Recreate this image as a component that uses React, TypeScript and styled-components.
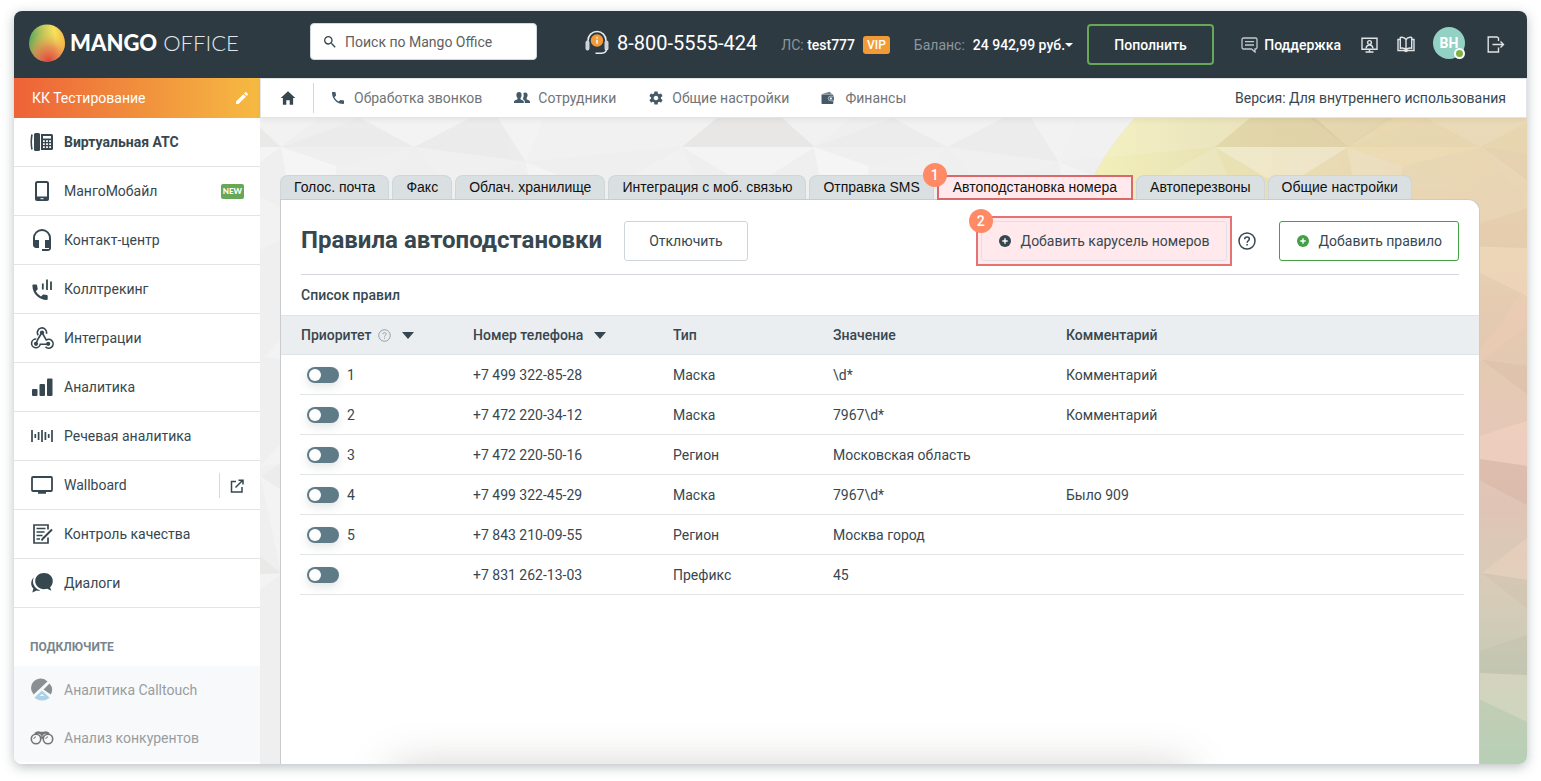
import React from "react";
import styled, { createGlobalStyle, css } from "styled-components";
import { MdSearch, MdEdit, MdPhone, MdHeadsetMic } from "react-icons/md";
import { IoMdHome, IoMdSettings } from "react-icons/io";

const ink = "#37474f";
const line = "#e1e5e8";

const GlobalStyle = createGlobalStyle`
  *, *::before, *::after { box-sizing: border-box; }
  body {
    margin: 0;
    background: #fff;
    color: ${ink};
    font: 14px/20px Roboto, "Open Sans", sans-serif;
  }
  button, input { font: inherit; color: inherit; }
  button { cursor: pointer; padding: 0; border: 0; background: none; }
  a { color: inherit; text-decoration: none; }
  svg { display: block; flex: none; }
`;

const Page = styled.div`
  min-height: 100vh;
  padding: 11px 14px 17px;
  display: flex;
`;

const Window = styled.div`
  flex: 1;
  min-width: 0;
  display: flex;
  flex-direction: column;
  border-radius: 8px;
  overflow: hidden;
  box-shadow: 0 3px 12px rgba(55, 71, 79, 0.34);
`;

/* ---------- header ---------- */

const Header = styled.header`
  display: flex;
  align-items: center;
  height: 67px;
  padding: 0 22px 0 15px;
  background: #2e3a42;
  color: #fff;
  white-space: nowrap;
`;

const Logo = styled.a`
  display: flex;
  align-items: center;
  gap: 5px;
  width: 281px;
  margin-top: -4px;
  font: 300 22px/28px Lato, sans-serif;
  color: #e3e6e8;
  strong { font-weight: 900; color: #fff; }
`;

const Search = styled.label`
  display: flex;
  align-items: center;
  gap: 7px;
  width: 227px;
  height: 37px;
  margin-top: -6px;
  padding-left: 11px;
  border: 1px solid #cfd8dc;
  border-radius: 4px;
  background: #fff;
  color: ${ink};
  input {
    flex: 1;
    min-width: 0;
    border: 0;
    padding: 0;
    outline: 0;
    background: none;
    &::placeholder { color: #616161; opacity: 1; }
  }
`;

const Hotline = styled.a`
  display: flex;
  align-items: center;
  gap: 8px;
  margin: -4px 24px 0 48px;
  font-size: 20px;
  line-height: 24px;
`;

const Account = styled.div`
  display: flex;
  align-items: center;
  gap: 8px;
  margin-right: 24px;
  font-weight: 500;
`;

const Dim = styled.span`
  color: #8c979d;
  font-weight: 400;
`;

const Vip = styled.span`
  padding: 0 4px;
  border-radius: 3px;
  background: #f29a36;
  font-size: 12px;
  line-height: 18px;
`;

const Balance = styled.button`
  display: flex;
  align-items: center;
  font-weight: 500;
  &::after {
    content: "";
    border: 4px solid transparent;
    border-top-color: #fff;
    border-bottom: 0;
  }
`;

const TopUp = styled.button`
  width: 127px;
  height: 41px;
  margin-left: -10px;
  border: 2px solid #66a858;
  border-radius: 4px;
  font-weight: 500;
`;

const HeaderTools = styled.div`
  display: flex;
  align-items: center;
  margin-left: auto;
`;

const Support = styled.a`
  display: flex;
  align-items: center;
  gap: 6px;
  margin-right: 20px;
  font-weight: 500;
`;

const ToolButton = styled.button<{ $gap: number }>`
  margin-right: ${(p) => p.$gap}px;
  color: #dfe3e5;
`;

const Avatar = styled.button`
  position: relative;
  width: 32px;
  height: 32px;
  margin: -4px 22px 0 0;
  border-radius: 50%;
  background: #94d1c5;
  font-weight: 700;
  &::after {
    content: "";
    position: absolute;
    right: 0;
    bottom: 0;
    width: 11px;
    height: 11px;
    border: 2px solid #fff;
    border-radius: 50%;
    background: #7cb342;
  }
`;

/* ---------- sidebar ---------- */

const Body = styled.div`
  flex: 1;
  display: flex;
`;

const Sidebar = styled.aside`
  flex: none;
  width: 246px;
  background: #fff;
`;

const Workspace = styled.button`
  display: flex;
  align-items: center;
  justify-content: space-between;
  width: 100%;
  height: 40px;
  padding: 0 10px 0 18px;
  background: linear-gradient(90deg, #ee6238, #f08a3c 45%, #f6bb42);
  color: #fff;
`;

const List = styled.ul`
  list-style: none;
  margin: 0;
  padding: 0;
`;

const Item = styled.li<{ $muted?: boolean }>`
  display: flex;
  align-items: center;
  padding-right: 16px;
  ${(p) =>
    p.$muted
      ? css`
          height: 48px;
          background: #f7f9fb;
          color: #999da0;
        `
      : css`
          height: 49px;
          border-bottom: 1px solid ${line};
        `}
`;

const ItemLink = styled.a<{ $active?: boolean }>`
  flex: 1;
  display: flex;
  align-items: center;
  gap: 10px;
  padding-left: 16px;
  color: inherit;
  font-weight: ${(p) => (p.$active ? 700 : 400)};
`;

const New = styled.span`
  padding: 0 2px;
  border-radius: 2px;
  background: #66a858;
  color: #fff;
  font: 900 8px/15px Lato, sans-serif;
`;

const External = styled.a`
  padding: 6px 0 5px 10px;
  border-left: 1px solid #d5d9e0;
`;

const ListTitle = styled.h2`
  margin: 0;
  padding: 29px 16px 9px;
  font-size: 12px;
  line-height: 20px;
  font-weight: 700;
  color: #78868f;
  text-transform: uppercase;
`;

/* ---------- content ---------- */

const Content = styled.div`
  flex: 1;
  min-width: 0;
  display: flex;
  flex-direction: column;
`;

const SubNav = styled.nav`
  position: relative;
  display: flex;
  align-items: center;
  height: 40px;
  padding: 0 20px 0 18px;
  border: 1px solid ${line};
  background: #fff;
  box-shadow: 0 2px 6px rgba(0, 0, 0, 0.06);
  color: #707578;
  z-index: 1;
`;

const HomeLink = styled.a`
  display: flex;
  align-items: center;
  height: 30px;
  padding-right: 16px;
  border-right: 1px solid #cfd6dd;
  color: ${ink};
`;

const SubLink = styled.a`
  display: flex;
  align-items: center;
  margin: 0 16px;
  svg { margin-right: 8px; color: #455a68; }
`;

const Version = styled.span`
  margin-left: auto;
  color: ${ink};
`;

const Main = styled.main`
  position: relative;
  flex: 1;
  display: flex;
  flex-direction: column;
  padding: 57px 47px 0 20px;
  background: #efefef;
`;

const Backdrop = styled.svg`
  position: absolute;
  inset: 0;
  width: 100%;
  height: 100%;
`;

const Tabs = styled.div`
  position: relative;
  display: flex;
  gap: 3px;
`;

const TabWrap = styled.div<{ $active?: boolean }>`
  position: relative;
  z-index: ${(p) => (p.$active ? 1 : 0)};
  margin-bottom: ${(p) => (p.$active ? -1 : 0)}px;
`;

const Tab = styled.button<{ $active?: boolean }>`
  display: block;
  padding: 0 13px;
  font: 14px/23px "Liberation Sans", Arial, sans-serif;
  color: #111;
  ${(p) =>
    p.$active
      ? css`
          padding: 0 14px;
          border: 2px solid #d9686c;
          line-height: 21px;
          background: #ffe9ec;
        `
      : css`
          border: 1px solid #cdd6d8;
          border-bottom: 0;
          border-radius: 8px 8px 0 0;
          background: #dae0e1;
        `}
`;

const StepBadge = styled.span`
  position: absolute;
  left: -14px;
  top: -12px;
  z-index: 2;
  width: 24px;
  height: 24px;
  border-radius: 50%;
  background: #ff8a65;
  color: #fff;
  font-weight: 500;
  line-height: 24px;
  text-align: center;
`;

const Panel = styled.section`
  position: relative;
  flex: 1;
  border: 1px solid #c8cccf;
  border-bottom: 0;
  border-radius: 0 12px 0 0;
  background: #fff;
  overflow: hidden;
  &::after {
    content: "";
    position: absolute;
    left: 10%;
    right: 25%;
    bottom: -32px;
    height: 20px;
    box-shadow: 0 0 44px 8px rgba(70, 60, 55, 0.26);
  }
`;

const Toolbar = styled.div`
  display: flex;
  align-items: center;
  margin: 0 20px;
  padding: 21px 0 13px;
  border-bottom: 1px solid #d3d7dd;
`;

const Title = styled.h1`
  margin: 0 22px 3px 0;
  font-size: 24px;
  line-height: 32px;
  font-weight: 700;
`;

const Button = styled.button<{ $kind?: "green" | "marked" }>`
  display: flex;
  align-items: center;
  gap: 9px;
  height: 40px;
  padding: 0 ${(p) => (p.$kind ? 16 : 24)}px;
  border: 1px solid ${(p) => (p.$kind === "green" ? "#43a047" : p.$kind ? "#e3dfe5" : "#cfd4db")};
  border-radius: 3px;
  background: ${(p) => (p.$kind === "marked" ? "none" : "#fff")};
`;

const Marked = styled.div`
  position: relative;
  margin: -5px 6px -5px auto;
  padding: 3px;
  border: 2px solid #e57373;
  background: #ffe9ec;
`;

const CornerBadge = styled(StepBadge)`
  left: -9px;
  top: -9px;
`;

const Help = styled.button`
  margin-right: 23px;
`;

const ListName = styled.h2`
  margin: 0 20px;
  font-size: 14px;
  line-height: 40px;
  font-weight: 500;
`;

const Table = styled.table`
  width: 100%;
  table-layout: fixed;
  border-collapse: collapse;
  text-align: left;
  th, td { height: 40px; padding: 0; }
  th:first-child, td:first-child { padding-left: 20px; }
  th { font-weight: 500; }
  thead tr { background: #eaeef1; box-shadow: inset 0 1px #dfe4e9, inset 0 -1px #dfe4e9; }
  tbody tr {
    background: linear-gradient(${line}, ${line}) no-repeat 19px 100% / calc(100% - 34px) 1px;
  }
`;

const Col = styled.col<{ $w?: number }>`
  width: ${(p) => (p.$w ? p.$w + "px" : "auto")};
`;

const Sort = styled.button`
  display: flex;
  align-items: center;
  font-weight: 500;
  svg { margin-left: 7px; color: #8b9ba5; }
  &::after {
    content: "";
    margin-left: 11px;
    border: 6px solid transparent;
    border-top: 7px solid ${ink};
    border-bottom: 0;
  }
`;

const Priority = styled.label`
  display: flex;
  align-items: center;
  gap: 8px;
  padding-left: 6px;
`;

const Toggle = styled.input`
  appearance: none;
  width: 32px;
  height: 16px;
  margin: 0;
  padding: 2px;
  border-radius: 8px;
  background: #5f7b88;
  box-shadow: 0 4px 8px rgba(55, 71, 79, 0.14);
  &::before {
    content: "";
    display: block;
    width: 12px;
    height: 12px;
    border-radius: 50%;
    background: #fff;
  }
  &:checked::before { margin-left: auto; }
`;

/* ---------- drawings ---------- */

const MangoMark = () => (
  <svg width="36" height="38" viewBox="0 0 36 38">
    <defs>
      <linearGradient id="mg1" x1="0" y1="0.55" x2="1" y2="0.35">
        <stop offset="0" stopColor="#4fa35c" />
        <stop offset="0.45" stopColor="#c3c75c" />
        <stop offset="0.75" stopColor="#f7e25c" />
        <stop offset="1" stopColor="#f3b73f" />
      </linearGradient>
      <radialGradient id="mg2" cx="0.55" cy="1" r="0.8">
        <stop offset="0" stopColor="#e0403f" />
        <stop offset="0.5" stopColor="#ea7f4b" stopOpacity="0.75" />
        <stop offset="1" stopColor="#f5c84c" stopOpacity="0" />
      </radialGradient>
    </defs>
    <ellipse cx="18" cy="19" rx="18" ry="18.6" fill="url(#mg1)" />
    <ellipse cx="18" cy="19" rx="18" ry="18.6" fill="url(#mg2)" />
  </svg>
);

const HotlineIcon = () => (
  <svg width="24" height="25" viewBox="0 0 24 25" fill="none" stroke="#e9ecee">
    <path d="M3 12V10.500a9 9 0 0 1 18 0V12" strokeWidth="1.600" />
    <path d="M2.500 12.500v6M21.500 12.500v6" strokeWidth="4" strokeLinecap="round" stroke="#cdd3d6" />
    <path d="M21.500 19c0 3-2 4-5 4.300h-6" strokeWidth="1.500" />
    <circle cx="12" cy="10.500" r="6.200" fill="#f29a36" stroke="none" />
    <path d="M12 9.800v4M12 7v1.500" strokeWidth="1.800" />
  </svg>
);

const ChatIcon = () => (
  <svg width="17" height="16" viewBox="0 0 17 16" fill="none" stroke="#c3c9cd" strokeWidth="1.300">
    <path d="M2.500 1h12A1.500 1.500 0 0 1 16 2.500v8a1.500 1.500 0 0 1-1.500 1.500H14v3l-3.500-3h-8A1.500 1.500 0 0 1 1 10.500v-8A1.500 1.500 0 0 1 2.500 1zM4 4.700h9M4 8h9" />
  </svg>
);

const MonitorUserIcon = () => (
  <svg width="17" height="16" viewBox="0 0 17 16" fill="none" stroke="currentColor" strokeWidth="1.400">
    <path d="M1 1.200h15v11H1zM8.500 12v3M4.500 15h8" />
    <circle cx="8.500" cy="5.500" r="1.900" />
    <path d="M5 11.500c.3-2.300 1.500-3.500 3.500-3.500s3.200 1.200 3.500 3.500" />
  </svg>
);

const BookIcon = () => (
  <svg width="18" height="17" viewBox="0 0 18 17" fill="none" stroke="currentColor" strokeWidth="1.400">
    <path d="M9 3.500C7.500 1.300 5.500 1 3.300 1.500v10.700C5.500 11.700 7.500 12 9 14c1.500-2 3.500-2.300 5.700-1.800V1.500C12.500 1 10.500 1.300 9 3.500zM9 3.500V14M3.300 3.500H1v11h6l2 1 2-1h6v-11h-2.300" />
  </svg>
);

const LogoutIcon = () => (
  <svg width="18" height="17" viewBox="0 0 18 17" fill="none" stroke="currentColor" strokeWidth="1.400">
    <path d="M11.500 5V2L10 1H1.200v15H11.500V11.500M5.500 8.500H16M13.500 5.500l3 3-3 3" />
  </svg>
);

const PeopleIcon = () => (
  <svg width="16" height="14" viewBox="0 0 16 14" fill="currentColor">
    <path d="M5 1c1.700 0 2.600 1.200 2.600 2.900 0 1.400-.5 2.500-1.100 3.100v1.300l2.500 1.200c.5.300.8.800.8 1.400V12H0v-1.100c0-.6.300-1.100.8-1.400l2.700-1.200V7C2.900 6.400 2.400 5.300 2.400 3.900 2.400 2.200 3.300 1 5 1z" />
    <path d="M11.200 1.500c1.600 0 2.400 1.100 2.400 2.600 0 1.200-.4 2.200-1 2.800v1.300l2.500 1.200c.5.300.9.800.9 1.300V12h-5.200v-1.300c0-.9-.4-1.600-1.100-2l-1-.6c.6-.9 1-2.300 1-4 0-.9-.2-1.500-.4-2 .5-.4 1.100-.6 1.900-.6z" />
  </svg>
);

const WalletIcon = () => (
  <svg width="16" height="14" viewBox="0 0 16 14" fill="currentColor">
    <path d="M.5 3.200 8.500.8l2 1.700v.7z" opacity="0.75" />
    <path d="M.5 3.500h10.800c.6 0 1 .4 1 1V12c0 .6-.4 1-1 1H1.500c-.6 0-1-.4-1-1z" />
    <path d="M13 5.200H9.500a2.300 2.300 0 0 0 0 4.600H13" fill="#5d7180" stroke="#c5ced4" strokeWidth="0.700" />
    <circle cx="9.900" cy="7.500" r="1" fill="#fff" />
  </svg>
);

const DeskPhoneIcon = () => (
  <svg width="24" height="20" viewBox="0 0 24 20" fill="currentColor">
    <path d="M2 2.500C1.300 6 1.300 14 2 17.500" fill="none" stroke="currentColor" strokeWidth="1.600" />
    <rect x="4" y="1" width="6" height="18" rx="1.500" />
    <path fillRule="evenodd" d="M11 2h10.500A1.500 1.500 0 0 1 23 3.500v13a1.500 1.500 0 0 1-1.500 1.500H11zm2 2v2.500h8V4zm0 4.200v1.800h1.800V8.200zm3.100 0v1.800h1.800V8.200zm3.100 0v1.800H21V8.200zM13 11.200V13h1.800v-1.800zm3.100 0V13h1.800v-1.800zm3.100 0V13H21v-1.800zM13 14.200V16h1.800v-1.800zm3.100 0V16h1.800v-1.800zm3.100 0V16H21v-1.800z" />
  </svg>
);

const MobileIcon = () => (
  <svg width="24" height="22" viewBox="0 0 24 22">
    <rect x="6" y="2" width="12" height="17" fill="none" stroke="currentColor" strokeWidth="2" rx="1.500" />
    <path d="M5 16.500h14v2.500a2 2 0 0 1-2 2H7a2 2 0 0 1-2-2z" fill="currentColor" />
    <path d="M10.500 18.700h3" stroke="#fff" />
  </svg>
);

const CallTrackIcon = () => (
  <svg width="24" height="24" viewBox="0 0 24 24" fill="currentColor">
    <path d="M3.300 7.500h2.900c.5 0 .8.300.9.800.1 1.100.3 2.100.6 3.100.1.400 0 .7-.2 1L5.800 14.200a14 14 0 0 0 5.200 5.200l1.800-1.700c.3-.3.600-.3 1-.2 1 .3 2 .5 3.100.5.500 0 .8.400.8.900V22c0 .5-.4.900-.9.900C9 22.900 2.400 16.500 2.400 8.400c0-.5.400-.9.900-.9z" />
    <path d="M12.800 6.500v6M17 2.500v10.500M21 4.500v8.500" stroke="currentColor" strokeWidth="1.800" />
  </svg>
);

const WebhookIcon = () => (
  <svg width="24" height="24" viewBox="0 0 24 24" fill="none" stroke="currentColor" strokeWidth="1.600">
    <path d="M8.300 9.300a4.600 4.600 0 1 1 8.100-1.500M12 6.500l4.300 7.600M16 14.300a4.400 4.400 0 1 1-.5 6.500" />
    <path d="M12 6.500 8.300 12.500 6 17.500M6.300 13a4.400 4.400 0 1 0 4 5.200H18" />
    <g fill="currentColor" stroke="none">
      <circle cx="12" cy="6.500" r="2.100" />
      <circle cx="6" cy="17.800" r="2.100" />
      <circle cx="18.200" cy="17.800" r="2.100" />
    </g>
  </svg>
);

const BarsIcon = () => (
  <svg width="24" height="20" viewBox="0 0 24 20" fill="currentColor">
    <rect x="2" y="12" width="5.500" height="7" rx="1" />
    <rect x="9.500" y="7" width="5.500" height="12" rx="1" />
    <rect x="17" y="1.500" width="5.500" height="17.500" rx="1" />
  </svg>
);

const SpeechIcon = () => (
  <svg width="24" height="14" viewBox="0 0 24 14" fill="none" stroke="currentColor" strokeWidth="1.700">
    <path d="M2 1v12M5.300 5v4M8.600 3v8M12 1v12M15.400 3v8M18.700 5v4M22 1v12" />
  </svg>
);

const ScreenIcon = () => (
  <svg width="24" height="20" viewBox="0 0 24 20" fill="none" stroke="currentColor" strokeWidth="1.800">
    <rect x="2" y="2" width="20" height="14" rx="1" />
    <path d="M8 17.500h8" strokeWidth="2.500" />
  </svg>
);

const QualityIcon = () => (
  <svg width="24" height="22" viewBox="0 0 24 22" fill="none" stroke="currentColor" strokeWidth="1.700">
    <path d="M18 6.500V2H4v18h14v-5.500" />
    <path d="M6.500 5.500h9M6.500 9h8M6.500 12.500h6M6.500 16h3.500" strokeWidth="1.500" />
    <path d="M22 6.500 13 15.500l-1.500 2" strokeWidth="2" />
  </svg>
);

const DialogsIcon = () => (
  <svg width="24" height="22" viewBox="0 0 24 22" fill="currentColor">
    <path d="M14 1c5 0 8.800 3.400 8.800 8 0 2.500-1 4.700-2.700 6.200l1.300 3.500-4.300-1.900c-1 .3-2 .4-3.100.4-5 0-8.800-3.600-8.800-8.200S9 1 14 1z" />
    <path d="M3.800 5.500C2 7 1.200 9 1.200 11.600c0 2 .8 3.700 2.200 5L2.300 20.500l4.500-2c1.300.3 2.500.2 3.500-.1-4-1-7-4.300-7.300-8.300-.1-1.600.1-3.100.8-4.600z" />
  </svg>
);

const ExternalIcon = () => (
  <svg width="14" height="14" viewBox="0 0 14 14" fill="none" stroke="currentColor" strokeWidth="1.500">
    <path d="M6 2.500H1.500v10.500H12V8M5.500 8.500 12.500 1.500M8.500 1.200H13V5.500" />
  </svg>
);

const CalltouchIcon = () => (
  <svg width="24" height="24" viewBox="0 0 24 24">
    <path d="M3.600 16.500A9.300 9.300 0 0 1 17.500 3.500z" fill="#8a8f92" />
    <path d="M19.500 5.500a9.500 9.500 0 0 1 1.300 11L13.500 11.500z" fill="#8a8f92" />
    <path fillRule="evenodd" d="m12 12.500 7.700 7.200a12 12 0 0 1-15.400 0zm0 3.500-2.300 2h4.600z" fill="#a9d3e4" />
  </svg>
);

const BinocularsIcon = () => (
  <svg width="24" height="16" viewBox="0 0 24 16" fill="none" stroke="#757575" strokeWidth="1.600">
    <circle cx="6" cy="9" r="4.700" />
    <circle cx="18" cy="9" r="4.700" />
    <path d="M5 4c2-1.700 3.500-2 5-1h4c1.500-1 3-.7 5 1M10.500 4.500h3M10.500 7.500h3" strokeWidth="2.400" />
    <path d="M3.800 9a2.300 2.300 0 0 1 2.200-2.200M15.800 9A2.300 2.300 0 0 1 18 6.800" strokeWidth="1" />
  </svg>
);

const PlusIcon = ({ color }: { color: string }) => (
  <svg width="14" height="14" viewBox="0 0 14 14">
    <circle cx="7" cy="7" r="6" fill={color} />
    <path d="M7 4.300v5.400M4.300 7h5.400" stroke="#fff" strokeWidth="1.400" />
  </svg>
);

const QuestionIcon = ({ size, weight }: { size: number; weight: number }) => (
  <svg width={size} height={size} viewBox="0 0 18 18" fill="none" stroke="currentColor" strokeWidth={weight}>
    <circle cx="9" cy="9" r="8" />
    <path d="M6.700 7.200C6.700 5.800 7.600 5 9 5s2.300.8 2.300 2c0 1.700-2.200 1.800-2.200 3.700M9.100 12v1.600" />
  </svg>
);

const facets: [string, string][] = [
  ["422,29 457,0 522,0 555,29", "rgba(120,110,80,.06)"],
  ["422,29 555,29 490,70", "rgba(255,255,255,.4)"],
  ["21,29 76,48 74,90 32,90", "rgba(255,255,255,.55)"],
  ["154,29 100,0 210,0", "rgba(255,255,255,.3)"],
  ["154,29 266,44 238,0 210,0", "rgba(0,0,0,.01)"],
  ["154,29 266,44 190,70", "rgba(255,255,255,.15)"],
  ["266,44 238,0 284,0", "rgba(255,255,255,.34)"],
  ["266,44 284,0 457,0 422,29", "rgba(255,255,255,.18)"],
  ["266,44 330,70 270,70", "rgba(255,255,255,.4)"],
  ["422,29 350,70 440,70", "rgba(255,255,255,.2)"],
  ["21,29 100,0 154,29", "rgba(0,0,0,.012)"],
  ["76,48 154,29 120,70 78,70", "rgba(255,255,255,.12)"],
  ["21,29 -10,0 60,0", "rgba(255,255,255,.25)"],
];

const sideFacets: [string, string][] = [
  ["1267,36 1222,29 1267,62", "rgba(150,100,60,.05)"],
  ["1200,112 1267,90 1267,130 1200,128", "rgba(150,90,60,.05)"],
  ["1200,128 1267,130 1267,178 1200,145", "rgba(255,230,200,.35)"],
  ["1200,260 1267,167 1267,209 1222,242", "rgba(255,210,190,.25)"],
  ["1222,242 1267,248 1267,276", "rgba(150,90,70,.06)"],
  ["1200,324 1267,303 1267,348 1200,338", "rgba(255,220,205,.45)"],
  ["1200,338 1267,348 1267,387 1200,352", "rgba(150,80,70,.08)"],
  ["1222,455 1267,420 1267,462", "rgba(255,220,200,.35)"],
  ["1222,455 1267,462 1267,490", "rgba(150,100,80,.06)"],
  ["1200,540 1267,517 1267,557 1200,554", "rgba(120,110,80,.06)"],
  ["1200,554 1267,557 1267,604 1200,572", "rgba(255,240,215,.3)"],
  ["0,29 0,10 21,29", "rgba(120,110,80,.05)"],
  ["0,29 21,29 0,44", "rgba(255,255,255,.4)"],
  ["0,110 0,78 21,90 21,122 0,132", "rgba(255,255,255,.25)"],
  ["0,238 6,238 21,220 21,242", "rgba(255,255,255,.3)"],
  ["0,360 0,348 21,325 21,345", "rgba(255,255,255,.3)"],
  ["0,348 21,345 21,372 0,358", "rgba(0,0,0,.012)"],
  ["0,358 21,372 21,455", "rgba(255,255,255,.3)"],
  ["0,438 21,455 0,456", "rgba(120,110,80,.05)"],
  ["0,456 21,456 0,472", "rgba(255,255,255,.4)"],
];

const tiles = [
  { x: 0, opacity: 0.85 },
  { x: 533, opacity: 0.7 },
  { x: 1066, opacity: 0.3 },
];

const Polygons = () => (
  <Backdrop viewBox="0 0 1267 646" preserveAspectRatio="xMaxYMin slice" aria-hidden="true">
    <defs>
      <linearGradient id="fall" x1="0" y1="0" x2="0" y2="1">
        <stop offset="0" stopColor="#e8d7b0" />
        <stop offset="0.15" stopColor="#e9d4b5" />
        <stop offset="0.32" stopColor="#e4cab0" />
        <stop offset="0.48" stopColor="#e5c8b7" />
        <stop offset="0.6" stopColor="#e0c4b5" />
        <stop offset="0.72" stopColor="#d8ccb8" />
        <stop offset="0.85" stopColor="#c8cbb6" />
        <stop offset="1" stopColor="#b7d0b5" />
      </linearGradient>
      <linearGradient id="sun" x1="840" y1="0" x2="1240" y2="0" gradientUnits="userSpaceOnUse">
        <stop offset="0" stopColor="#f2efba" />
        <stop offset="0.25" stopColor="#eae4b5" />
        <stop offset="1" stopColor="#e8d7b0" stopOpacity="0" />
      </linearGradient>
    </defs>
    <path d="M875 0Q840 36 820 90V646H1267V0z" fill="url(#fall)" />
    <path d="M875 0Q840 36 820 90H1267V0z" fill="url(#sun)" />
    {tiles.map((tile) => (
      <g key={tile.x} transform={`translate(${tile.x} 0)`} opacity={tile.opacity}>
        {facets.map(([points, fill]) => (
          <polygon key={points} points={points} fill={fill} />
        ))}
      </g>
    ))}
    <g opacity="0.8">
      {sideFacets.map(([points, fill]) => (
        <polygon key={points} points={points} fill={fill} />
      ))}
    </g>
    <polygon points="1088,29 1133,0 1050,0" fill="rgba(150,110,50,.05)" />
    <polygon points="956,29 990,0 1055,0 1088,29" fill="rgba(150,120,50,.04)" />
    <polygon points="1088,29 1222,29 1143,48" fill="rgba(255,235,190,.2)" />
  </Backdrop>
);

/* ---------- data ---------- */

const services = [
  { name: "Виртуальная АТС", icon: <DeskPhoneIcon />, active: true },
  { name: "МангоМобайл", icon: <MobileIcon />, fresh: true },
  { name: "Контакт-центр", icon: <MdHeadsetMic size={24} /> },
  { name: "Коллтрекинг", icon: <CallTrackIcon /> },
  { name: "Интеграции", icon: <WebhookIcon /> },
  { name: "Аналитика", icon: <BarsIcon /> },
  { name: "Речевая аналитика", icon: <SpeechIcon /> },
  { name: "Wallboard", icon: <ScreenIcon />, external: true },
  { name: "Контроль качества", icon: <QualityIcon /> },
  { name: "Диалоги", icon: <DialogsIcon /> },
];

const offers = [
  { name: "Аналитика Calltouch", icon: <CalltouchIcon /> },
  { name: "Анализ конкурентов", icon: <BinocularsIcon /> },
];

const sections = [
  { name: "Обработка звонков", icon: <MdPhone size={16} /> },
  { name: "Сотрудники", icon: <PeopleIcon /> },
  { name: "Общие настройки", icon: <IoMdSettings size={16} /> },
  { name: "Финансы", icon: <WalletIcon /> },
];

const tabs = [
  "Голос. почта",
  "Факс",
  "Облач. хранилище",
  "Интеграция с моб. связью",
  "Отправка SMS",
  "Автоподстановка номера",
  "Автоперезвоны",
  "Общие настройки",
];

const rules = [
  { n: "1", phone: "+7 499 322-85-28", type: "Маска", value: "\\d*", note: "Комментарий" },
  { n: "2", phone: "+7 472 220-34-12", type: "Маска", value: "7967\\d*", note: "Комментарий" },
  { n: "3", phone: "+7 472 220-50-16", type: "Регион", value: "Московская область", note: "" },
  { n: "4", phone: "+7 499 322-45-29", type: "Маска", value: "7967\\d*", note: "Было 909" },
  { n: "5", phone: "+7 843 210-09-55", type: "Регион", value: "Москва город", note: "" },
  { n: "", phone: "+7 831 262-13-03", type: "Префикс", value: "45", note: "" },
];

export default function App() {
  return (
    <Page>
      <GlobalStyle />
      <Window>
        <Header>
          <Logo href="#">
            <MangoMark />
            <span>
              <strong>MANGO</strong> OFFICE
            </span>
          </Logo>
          <Search>
            <MdSearch size={16} />
            <input type="search" aria-label="Поиск" placeholder="Поиск по Mango Office" />
          </Search>
          <Hotline href="#">
            <HotlineIcon />
            8-800-5555-424
          </Hotline>
          <Account>
            <span>
              <Dim>ЛС:</Dim> test777
            </span>
            <Vip>VIP</Vip>
          </Account>
          <Account>
            <Dim>Баланс:</Dim>
            <Balance>24 942,99 руб.</Balance>
          </Account>
          <TopUp>Пополнить</TopUp>
          <HeaderTools>
            <Support href="#">
              <ChatIcon />
              Поддержка
            </Support>
            <ToolButton $gap={19} aria-label="Рабочее место">
              <MonitorUserIcon />
            </ToolButton>
            <ToolButton $gap={18} aria-label="Справочник">
              <BookIcon />
            </ToolButton>
            <Avatar>ВН</Avatar>
            <ToolButton $gap={0} aria-label="Выйти">
              <LogoutIcon />
            </ToolButton>
          </HeaderTools>
        </Header>

        <Body>
          <Sidebar>
            <Workspace>
              КК Тестирование
              <MdEdit size={16} />
            </Workspace>
            <List>
              {services.map((s) => (
                <Item key={s.name}>
                  <ItemLink href="#" $active={s.active}>
                    {s.icon}
                    {s.name}
                  </ItemLink>
                  {s.fresh && <New>NEW</New>}
                  {s.external && (
                    <External href="#" aria-label="Открыть Wallboard">
                      <ExternalIcon />
                    </External>
                  )}
                </Item>
              ))}
            </List>
            <ListTitle>Подключите</ListTitle>
            <List>
              {offers.map((s) => (
                <Item key={s.name} $muted>
                  <ItemLink href="#">
                    {s.icon}
                    {s.name}
                  </ItemLink>
                </Item>
              ))}
            </List>
          </Sidebar>

          <Content>
            <SubNav>
              <HomeLink href="#" aria-label="Главная">
                <IoMdHome size={18} />
              </HomeLink>
              {sections.map((s) => (
                <SubLink href="#" key={s.name}>
                  {s.icon}
                  {s.name}
                </SubLink>
              ))}
              <Version>Версия: Для внутреннего использования</Version>
            </SubNav>

            <Main>
              <Polygons />
              <Tabs role="tablist">
                {tabs.map((t, i) => (
                  <TabWrap key={t} $active={i === 5}>
                    <Tab role="tab" aria-selected={i === 5} $active={i === 5}>
                      {t}
                    </Tab>
                    {i === 5 && <StepBadge>1</StepBadge>}
                  </TabWrap>
                ))}
              </Tabs>

              <Panel>
                <Toolbar>
                  <Title>Правила автоподстановки</Title>
                  <Button>Отключить</Button>
                  <Marked>
                    <Button $kind="marked">
                      <PlusIcon color={ink} />
                      Добавить карусель номеров
                    </Button>
                    <CornerBadge>2</CornerBadge>
                  </Marked>
                  <Help aria-label="Справка">
                    <QuestionIcon size={18} weight={1.5} />
                  </Help>
                  <Button $kind="green">
                    <PlusIcon color="#43a047" />
                    Добавить правило
                  </Button>
                </Toolbar>
                <ListName>Список правил</ListName>
                <Table>
                  <colgroup>
                    <Col $w={192} />
                    <Col $w={200} />
                    <Col $w={160} />
                    <Col $w={233} />
                    <Col />
                  </colgroup>
                  <thead>
                    <tr>
                      <th>
                        <Sort>
                          Приоритет
                          <QuestionIcon size={13} weight={1.3} />
                        </Sort>
                      </th>
                      <th>
                        <Sort>Номер телефона</Sort>
                      </th>
                      <th>Тип</th>
                      <th>Значение</th>
                      <th>Комментарий</th>
                    </tr>
                  </thead>
                  <tbody>
                    {rules.map((r) => (
                      <tr key={r.phone}>
                        <td>
                          <Priority>
                            <Toggle type="checkbox" aria-label={"Правило " + r.phone} />
                            {r.n}
                          </Priority>
                        </td>
                        <td>{r.phone}</td>
                        <td>{r.type}</td>
                        <td>{r.value}</td>
                        <td>{r.note}</td>
                      </tr>
                    ))}
                  </tbody>
                </Table>
              </Panel>
            </Main>
          </Content>
        </Body>
      </Window>
    </Page>
  );
}
